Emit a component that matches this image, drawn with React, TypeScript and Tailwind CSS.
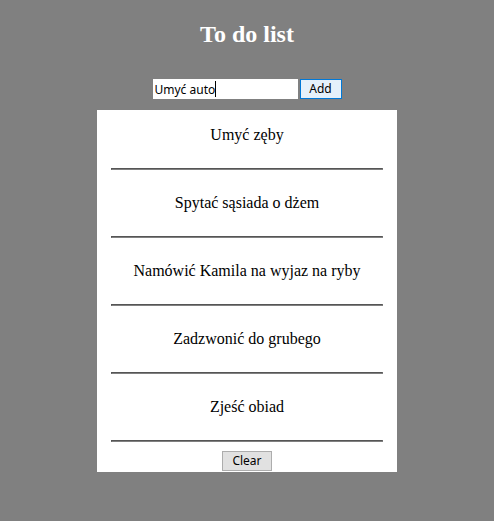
import { Fragment, useState } from "react";
import type { FormEvent } from "react";

const initialTasks = [
  "Umyć zęby",
  "Spytać sąsiada o dżem",
  "Namówić Kamila na wyjaz na ryby",
  "Zadzwonić do grubego",
  "Zjeść obiad",
];

const controlFont = "font-['Noto_Sans',sans-serif] text-[12px] leading-4";

export default function App() {
  const [tasks, setTasks] = useState(initialTasks);
  const [draft, setDraft] = useState("Umyć auto");

  const addTask = (event: FormEvent) => {
    event.preventDefault();
    if (!draft.trim()) return;
    setTasks([...tasks, draft.trim()]);
    setDraft("");
  };

  return (
    <main className="flex min-h-screen flex-col items-center bg-[#808080] pt-5 pb-12 font-['Liberation_Serif',serif] text-base leading-[18px] text-black">
      <h1 className="text-2xl leading-7 font-bold text-white">To do list</h1>

      <form onSubmit={addTask} className="mt-[31px] flex gap-0.5">
        <div className={`relative w-[145px] ${controlFont}`}>
          <input
            type="text"
            aria-label="New task"
            value={draft}
            onChange={(event) => setDraft(event.target.value)}
            className="block h-5 w-full bg-white px-0.5 caret-transparent outline-none"
          />
          <span
            aria-hidden="true"
            className="pointer-events-none absolute top-0.5 left-0.5 h-4 border-r border-black whitespace-pre text-transparent"
          >
            {draft}
          </span>
        </div>
        <button
          type="submit"
          className={`h-5 w-[42px] border border-[#0078d7] bg-[#e5f1fb] ${controlFont}`}
        >
          Add
        </button>
      </form>

      <section className="mt-[11px] flex w-full max-w-[300px] flex-col bg-white px-3.5 pb-px text-center">
        {tasks.map((task, index) => (
          <Fragment key={index}>
            <p className={index === 0 ? "mt-4 mb-6" : "my-6"}>{task}</p>
            <hr className="h-0.5 border border-t-[#555555] border-r-[#808080] border-b-[#808080] border-l-[#555555]" />
          </Fragment>
        ))}
        <button
          type="button"
          onClick={() => setTasks([])}
          className={`mt-[9px] h-5 w-[50px] self-center border border-[#adadad] bg-[#e1e1e1] ${controlFont}`}
        >
          Clear
        </button>
      </section>
    </main>
  );
}
